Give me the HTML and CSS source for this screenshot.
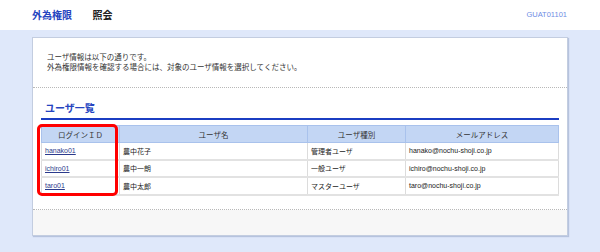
FILE: index.html
```html
<!DOCTYPE html>
<html lang="ja">
<head>
    <meta charset="UTF-8">
    <title>外為権限 照会</title>
    <link rel="stylesheet" href="styles.css">
</head>
<body>

    <div class="page-header">
        <div class="page-title">
            <span class="title-main">外為権限</span>
            <span class="title-sub">照会</span>
        </div>
        <span class="screen-id">GUAT01101</span>
    </div>

    <div class="main">
        <div class="card">
            <div class="intro">
                <p>ユーザ情報は以下の通りです。</p>
                <p>外為権限情報を確認する場合には、対象のユーザ情報を選択してください。</p>
            </div>

            <div class="section">
                <h2>ユーザ一覧</h2>
                <div class="table-wrap">
                    <table class="user-table">
                        <thead>
                            <tr>
                                <th class="col-id">ログインＩＤ</th>
                                <th class="col-name">ユーザ名</th>
                                <th class="col-type">ユーザ種別</th>
                                <th class="col-mail">メールアドレス</th>
                            </tr>
                        </thead>
                        <tbody>
                            <tr>
                                <td><a href="#">hanako01</a></td>
                                <td>農中花子</td>
                                <td>管理者ユーザ</td>
                                <td>hanako@nochu-shoji.co.jp</td>
                            </tr>
                            <tr>
                                <td><a href="#">ichiro01</a></td>
                                <td>農中一朗</td>
                                <td>一般ユーザ</td>
                                <td>ichiro@nochu-shoji.co.jp</td>
                            </tr>
                            <tr>
                                <td><a href="#">taro01</a></td>
                                <td>農中太郎</td>
                                <td>マスターユーザ</td>
                                <td>taro@nochu-shoji.co.jp</td>
                            </tr>
                        </tbody>
                    </table>
                    <div class="highlight"></div>
                </div>
            </div>

            <div class="card-footer"></div>
        </div>
    </div>

</body>
</html>
```

FILE: styles.css
```css
/* 全体 */
body {
    font-family: "Liberation Sans", "Noto Sans CJK JP", sans-serif;
    background-color: #dfe8fa;
    margin: 0;
    padding: 0;
    color: #222;
}

/* ヘッダー */
.page-header {
    height: 30px;
    background-color: #fff;
    display: flex;
    align-items: center;
    justify-content: space-between;
    padding: 0 33px 2px 32px;
    box-sizing: border-box;
}

.title-main {
    font-family: "Noto Sans CJK JP", sans-serif;
    font-size: 10px;
    font-weight: bold;
    color: #2544c0;
    margin-right: 16px;
}

.title-sub {
    font-family: "Noto Sans CJK JP", sans-serif;
    font-size: 10px;
    font-weight: bold;
    color: #222;
}

.screen-id {
    font-size: 7.5px;
    color: #6e8de4;
}

/* メイン */
.main {
    padding: 7px 32px 16px 32px;
}

.card {
    background-color: #fff;
    border: 1px solid #c3cde0;
    box-shadow: 1px 1px 1px rgba(120, 140, 180, 0.4);
}

.intro {
    padding: 14px 14px 15px 14px;
    border-bottom: 1px dotted #b8b8b8;
}

.intro p {
    margin: 0;
    font-family: "Noto Sans CJK JP", sans-serif;
    font-size: 7.5px;
    line-height: 10px;
    color: #333;
}

/* ユーザ一覧 */
.section {
    padding: 0 8px 13px 8px;
    border-bottom: 1px dotted #b8b8b8;
}

.section h2 {
    margin: 0;
    padding: 12px 0 3px 4px;
    font-family: "Noto Sans CJK JP", sans-serif;
    font-size: 10px;
    line-height: 15px;
    color: #2544c0;
    border-bottom: 2px solid #1b3dc2;
    margin-bottom: 5px;
}

.table-wrap {
    position: relative;
}

.user-table {
    width: 100%;
    border-collapse: collapse;
    font-size: 7px;
    border: 1px solid #dcdcdc;
}

.user-table th {
    background-color: #c3d6f4;
    border: 1px solid #a9c2ec;
    font-family: "Noto Sans CJK JP", sans-serif;
    font-weight: normal;
    font-size: 7.5px;
    color: #333;
    height: 16px;
    padding: 0;
}

.user-table td {
    font-family: "Liberation Sans", "Noto Sans CJK JP", sans-serif;
    border-left: 1px solid #dcdcdc;
    border-bottom: 2px solid #e2e2e2;
    padding: 0 3px;
    height: 15.5px;
    color: #222;
}

.user-table td a {
    color: #2b3a8c;
}

.col-id { width: 77px; }
.col-name { width: 187px; }
.col-type { width: 97px; }

/* 強調枠 */
.highlight {
    position: absolute;
    left: -4px;
    top: -1px;
    width: 75px;
    height: 66px;
    border: 3px solid #f00;
    border-radius: 5px;
}

.card-footer {
    height: 25px;
    background-color: #f7f7f7;
}
```
